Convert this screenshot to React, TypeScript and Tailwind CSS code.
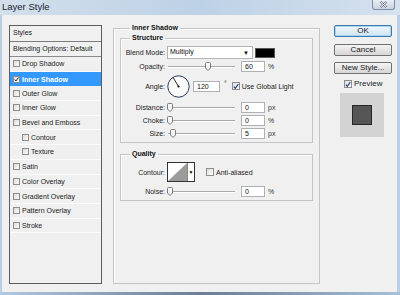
import React from "react";

function Tick({ color = "#1d3b86" }: { color?: string }) {
  return (
    <svg width="7" height="7" viewBox="0 0 7 7" className="block">
      <path d="M1 3.6 L2.7 5.6 L6.2 0.8" fill="none" stroke={color} strokeWidth="1.3" />
    </svg>
  );
}

function SmallBox({ checked }: { checked?: boolean }) {
  return (
    <span className="flex items-center justify-center w-[7px] h-[7px] shrink-0 border border-[#8d8d8d] bg-gradient-to-br from-[#dcdcdc] to-[#fbfbfb]">
      {checked && <Tick color="#17223f" />}
    </span>
  );
}

function Box({ checked }: { checked?: boolean }) {
  return (
    <span className="flex items-center justify-center w-[8px] h-[8px] shrink-0 border border-[#8d8d8d] bg-gradient-to-br from-[#dedede] to-[#fdfdfd]">
      {checked && <Tick />}
    </span>
  );
}

function Slider({ pos }: { pos: number }) {
  return (
    <div className="relative flex items-center w-[67px] h-[11px] shrink-0">
      <div className="w-full h-[2px] border-t border-[#a9a9a9] bg-white" />
      <svg
        width="6"
        height="9"
        viewBox="0 0 6 9"
        className="absolute top-[1px]"
        style={{ left: pos - 3 }}
      >
        <path d="M0.5 1.5 Q0.5 0.5 1.5 0.5 H4.5 Q5.5 0.5 5.5 1.5 V6 L3 8.5 L0.5 6 Z" fill="#f4f4f4" stroke="#7b7b7b" strokeWidth="1" />
      </svg>
    </div>
  );
}

function Field({ v }: { v: string }) {
  return (
    <div className="w-[24px] h-[11px] shrink-0 border border-[#aeb0b6] bg-white text-[7px] leading-[9px] pl-[3px] text-[#111]">
      {v}
    </div>
  );
}

function Label({ children }: { children: React.ReactNode }) {
  return <div className="w-[44px] shrink-0 text-right text-[7px] leading-[9px] text-[#222]">{children}</div>;
}

function SliderRow({ label, pos, v, unit, mt }: { label: string; pos: number; v: string; unit: string; mt: string }) {
  return (
    <div className={`flex items-center h-[11px] ${mt}`}>
      <Label>{label}</Label>
      <div className="ml-[3px]">
        <Slider pos={pos} />
      </div>
      <div className="ml-[6px]">
        <Field v={v} />
      </div>
      <span className="ml-[3px] text-[7px] leading-[9px] text-[#333]">{unit}</span>
    </div>
  );
}

const listItems: { name: string; indent?: boolean; checked?: boolean; selected?: boolean }[] = [
  { name: "Drop Shadow" },
  { name: "Inner Shadow", checked: true, selected: true },
  { name: "Outer Glow" },
  { name: "Inner Glow" },
  { name: "Bevel and Emboss" },
  { name: "Contour", indent: true },
  { name: "Texture", indent: true },
  { name: "Satin" },
  { name: "Color Overlay" },
  { name: "Gradient Overlay" },
  { name: "Pattern Overlay" },
  { name: "Stroke" },
];

function Button({ children, primary }: { children: React.ReactNode; primary?: boolean }) {
  return (
    <div
      className={
        primary
          ? "w-[58px] h-[12px] rounded-[2px] border border-[#3d7bad] bg-gradient-to-b from-[#f2f8fc] to-[#cfe3f2] shadow-[inset_0_0_0_1px_#a8d6f3] flex items-center justify-center text-[8px] leading-[10px] text-[#1a1a1a]"
          : "w-[58px] h-[12px] rounded-[2px] border border-[#707070] bg-gradient-to-b from-[#f4f4f4] to-[#d6d6d6] flex items-center justify-center text-[8px] leading-[10px] text-[#1a1a1a]"
      }
    >
      {children}
    </div>
  );
}

export default function App() {
  return (
    <div className="w-[400px] h-[295px] flex flex-col overflow-hidden bg-[#b9cfe5] font-['Liberation_Sans',Arial,sans-serif]">
      {/* title bar */}
      <div className="h-[15px] shrink-0 flex items-start bg-gradient-to-r from-[#d3dfeb] via-[#bdd1e6] to-[#d5e2ee]">
        <span className="ml-[2px] mt-[1px] text-[9.5px] leading-[11px] text-[#1c2633]">Layer Style</span>
        <div className="ml-auto mr-[5px] w-[23px] h-[10px] rounded-b-[3px] border border-t-0 border-[#7d8ea4] bg-gradient-to-b from-[#e9eef4] to-[#c9d4e0] flex items-center justify-center">
          <svg width="9" height="7" viewBox="0 0 9 7">
            <path d="M1.5 0.8 L7.5 6.2 M7.5 0.8 L1.5 6.2" stroke="#6c7a8c" strokeWidth="2.2" />
            <path d="M1.5 0.8 L7.5 6.2 M7.5 0.8 L1.5 6.2" stroke="#fbfcfd" strokeWidth="1" />
          </svg>
        </div>
      </div>

      {/* body */}
      <div className="h-[277px] shrink-0 mx-[2px] mr-[3px] bg-[#f0f0f0] flex items-start pt-[9px] pl-[7px]">
        {/* left list */}
        <div className="mt-[1px] w-[93px] h-[259px] shrink-0 border border-[#5c5c5c] bg-[#f0f0f0] flex flex-col text-[7px] text-[#1a1a1a]">
          <div className="h-[16px] shrink-0 flex items-center pl-[3px] border-b border-[#7c7c7c]">Styles</div>
          <div className="h-[15px] shrink-0 flex items-center pl-[3px] border-b border-[#8a8a8a]">Blending Options: Default</div>
          {listItems.map((it) => (
            <div
              key={it.name}
              className={
                it.selected
                  ? "h-[14.7px] shrink-0 flex items-center bg-[#3399ff] text-white font-bold"
                  : "h-[14.7px] shrink-0 flex items-center border-b border-[#fbfbfb]"
              }
            >
              <span className={it.indent ? "ml-[12px]" : "ml-[3px]"}>
                <SmallBox checked={it.checked} />
              </span>
              <span className="ml-[2px] leading-[9px]">{it.name}</span>
            </div>
          ))}
        </div>

        {/* main group */}
        <fieldset className="ml-[11px] w-[206px] h-[260px] shrink-0 border border-[#c4c4c4] shadow-[inset_1px_1px_0_#ffffff] px-[6px] pt-[2px]">
          <legend className="ml-[10px] px-[2px] text-[7px] leading-[8px] font-bold text-[#111]">Inner Shadow</legend>

          {/* Structure */}
          <fieldset className="w-[193px] h-[109px] border border-[#c4c4c4] shadow-[inset_1px_1px_0_#ffffff] pb-[4px]">
            <legend className="ml-[9px] px-[2px] text-[7px] leading-[8px] font-bold text-[#111]">Structure</legend>

            <div className="flex items-center h-[13px] mt-[4px]">
              <Label>Blend Mode:</Label>
              <div className="ml-[2px] w-[86px] h-[13px] border border-[#b4b4b4] bg-white flex items-center pl-[2px] pr-[3px] text-[7px] text-[#111]">
                <span>Multiply</span>
                <span className="ml-auto text-[6px] leading-[6px]">▼</span>
              </div>
              <div className="ml-[2px] w-[20px] h-[10px] bg-black border border-[#555]" />
            </div>

            <SliderRow label="Opacity:" pos={40} v="60" unit="%" mt="mt-[2px]" />

            <div className="flex items-center h-[22px] mt-[3px]">
              <Label>Angle:</Label>
              <svg width="23" height="23" viewBox="0 0 23 23" className="ml-[2px] shrink-0">
                <circle cx="11.5" cy="11.5" r="10.7" fill="#fafafa" stroke="#25375a" strokeWidth="1" />
                <line x1="11.5" y1="11.5" x2="6" y2="2.3" stroke="#111" strokeWidth="0.9" />
                <circle cx="11.5" cy="11.5" r="1.1" fill="#111" />
              </svg>
              <div className="ml-[3px] w-[27px] h-[11px] shrink-0 border border-[#aeb0b6] bg-white text-[7px] leading-[9px] pl-[3px] text-[#111]">120</div>
              <span className="ml-[4px] text-[7px] leading-[9px] self-start mt-[4px] text-[#333]">°</span>
              <span className="ml-[5px]">
                <Box checked />
              </span>
              <span className="ml-[2px] text-[7px] leading-[9px] text-[#222]">Use Global Light</span>
            </div>

            <SliderRow label="Distance:" pos={2} v="0" unit="px" mt="mt-[5px]" />
            <SliderRow label="Choke:" pos={2} v="0" unit="%" mt="mt-[2px]" />
            <SliderRow label="Size:" pos={5} v="5" unit="px" mt="mt-[2px]" />
          </fieldset>

          {/* Quality */}
          <fieldset className="mt-[7px] w-[193px] h-[51px] border border-[#c4c4c4] shadow-[inset_1px_1px_0_#ffffff]">
            <legend className="ml-[9px] px-[2px] text-[7px] leading-[8px] font-bold text-[#111]">Quality</legend>
            <div className="flex items-center h-[20px] mt-[4px]">
              <Label>Contour:</Label>
              <div className="ml-[2px] flex h-[20px] shrink-0 border border-[#333]">
                <svg width="19" height="18" viewBox="0 0 19 18" className="block bg-white">
                  <path d="M0 18 L19 0 L19 18 Z" fill="#9b9b9b" />
                </svg>
                <div className="w-[7px] border-l border-[#888] bg-white flex items-center justify-center text-[5px] leading-[5px]">▼</div>
              </div>
              <span className="ml-[11px]">
                <Box />
              </span>
              <span className="ml-[2px] text-[7px] leading-[9px] text-[#222]">Anti-aliased</span>
            </div>
            <SliderRow label="Noise:" pos={2} v="0" unit="%" mt="mt-[4px]" />
          </fieldset>
        </fieldset>

        {/* right column */}
        <div className="ml-[14px] mt-[1px] w-[58px] shrink-0 flex flex-col">
          <Button primary>OK</Button>
          <div className="mt-[7px]">
            <Button>Cancel</Button>
          </div>
          <div className="mt-[6px]">
            <Button>New Style...</Button>
          </div>
          <div className="mt-[6px] ml-[10px] flex items-center h-[8px]">
            <Box checked />
            <span className="ml-[2px] text-[8px] leading-[10px] text-[#222]">Preview</span>
          </div>
          <div className="mt-[5px] ml-[6px] w-[44px] h-[44px] bg-[#d3d3d3] flex items-center justify-center">
            <div className="w-[20px] h-[20px] bg-[#555555] border border-[#262626]" />
          </div>
        </div>
      </div>

      {/* bottom frame */}
      <div className="flex-1 bg-gradient-to-r from-[#b3c9df] via-[#6b7e92] to-[#a8bfd6]" />
    </div>
  );
}
